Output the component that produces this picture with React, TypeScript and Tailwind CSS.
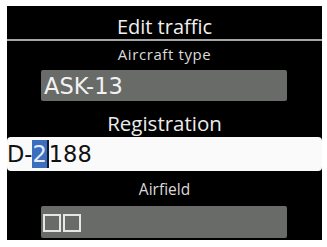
export default function App() {
  const label = "font-['Open_Sans',sans-serif] leading-none text-center";
  const value = "font-['DejaVu_Sans',sans-serif] text-[22.5px]";

  return (
    <div className="min-h-[247px] w-[327px] bg-white pl-[7px] pt-[6px]">
      <div className="flex h-[234px] w-[315px] flex-col bg-black">
        {/* Title */}
        <div className={`${label} h-[33px] pt-[11px] text-[20px] text-[#f0f0f0]`}>Edit traffic</div>
        <div className="h-[2px] bg-[#a6a6a6]" />

        {/* Aircraft type */}
        <div className={`${label} h-[29px] pt-[6px] text-[15px] tracking-[0.6px] text-[#dadada]`}>Aircraft type</div>
        <div className={`${value} ml-[34px] h-[31px] w-[246px] rounded-[2px] bg-[#686b68] pl-[3px] pt-[5px] leading-none text-[#f2f2f2]`}>
          ASK-13
        </div>

        {/* Registration */}
        <div className={`${label} h-[36px] pt-[12px] text-[20.5px] text-[#ececec]`}>Registration</div>
        <div className={`${value} h-[34px] rounded-[4px] bg-[#fafafa] pt-[3px] leading-[28px] text-[#111]`}>
          D-
          <span className="inline-block border-r-2 border-[#0b1a33] bg-[#3d6dbd] leading-[28px] text-[#e3ecf8]">2</span>
          188
        </div>

        {/* Airfield */}
        <div className={`${label} h-[35px] pt-[11px] text-[15.5px] text-[#dadada]`}>Airfield</div>
        <div className="ml-[34px] flex h-[32px] w-[246px] gap-[2px] rounded-[2px] bg-[#686b68] pl-[2px] pt-[8px]">
          <span className="h-[18px] w-[18px] border-2 border-[#e6e6e6]" />
          <span className="h-[18px] w-[18px] border-2 border-[#e6e6e6]" />
        </div>
      </div>
    </div>
  );
}
